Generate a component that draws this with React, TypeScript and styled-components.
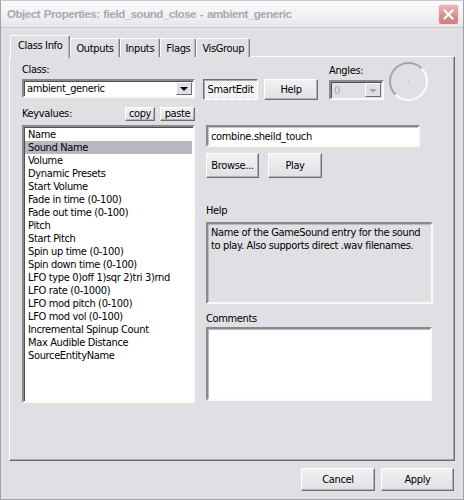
import styled, { createGlobalStyle } from "styled-components";

const FACE = "#e0dfe3";
const UI_FONT = `"DejaVu Sans Condensed", "Liberation Sans", sans-serif`;

const GlobalStyle = createGlobalStyle`
    html, body {
        margin: 0;
        padding: 0;
        background: ${FACE};
    }
    * { box-sizing: border-box; }
`;

//window frame
const Window = styled.div`
    width: 464px;
    height: 500px;
    display: flex;
    flex-direction: column;
    background: ${FACE};
    border: 1px solid #a4a3aa;
    border-top-color: #c9c8ce;
    font-family: ${UI_FONT};
    font-size: 11px;
    letter-spacing: -0.35px;
    color: #000;
`;
const TitleBar = styled.div`
    height: 27px;
    display: flex;
    align-items: center;
    justify-content: space-between;
    padding: 0 4px 0 6px;
    background: linear-gradient(#fbfbfc, #f1f1f3 60%, #e6e6ea);
    border-bottom: 1px solid #c8c7cd;
`;
const Title = styled.div`
    font-family: "Liberation Sans", sans-serif;
    font-weight: bold;
    font-size: 11.5px;
    color: #a9a8b1;
    letter-spacing: -0.45px;
    word-spacing: 1px;
`;
const CloseButton = styled.div`
    width: 21px;
    height: 21px;
    border-radius: 3px;
    border: 1px solid #f4e4e4;
    background: linear-gradient(#eab7b7, #d98f8f 60%, #cf7f7f);
    display: flex;
    align-items: center;
    justify-content: center;
`;

const Body = styled.div`
    flex: 1;
    display: flex;
    flex-direction: column;
    padding: 7px 8px 0 8px;
`;

//tabs
const TabStrip = styled.div`
    display: flex;
    align-items: flex-start;
    height: 22px;
    margin-bottom: -1px;
    padding-left: 1px;
    position: relative;
    z-index: 1;
`;
const Tab = styled.div<{ $active?: boolean }>`
    height: ${(p) => (p.$active ? "23px" : "19px")};
    margin-top: ${(p) => (p.$active ? "0" : "3px")};
    padding: ${(p) => (p.$active ? "0 7px 3px" : "0 5px")};
    display: flex;
    align-items: center;
    background: ${FACE};
    border: 1px solid #fff;
    border-bottom: none;
    border-right: 1px solid #7d7c82;
    border-radius: 2px 2px 0 0;
    box-shadow: inset -1px 0 0 #b9b8be;
    line-height: 13px;
`;
const TabPanel = styled.div`
    height: 405px;
    display: flex;
    flex-direction: column;
    padding: 0 12px;
    border: 1px solid #fff;
    border-right-color: #6b6a70;
    border-bottom-color: #6b6a70;
    box-shadow: inset -1px -1px 0 #a9a8ae;
`;

//top row: class combo, buttons, angles
const TopRow = styled.div`
    display: flex;
    align-items: flex-end;
    padding-top: 5px;
`;
const Field = styled.div<{ $ml?: number; $mb?: number }>`
    display: flex;
    flex-direction: column;
    margin-left: ${(p) => p.$ml ?? 0}px;
    margin-bottom: ${(p) => p.$mb ?? 0}px;
`;
const Label = styled.div<{ $mt?: number }>`
    line-height: 13px;
    height: 13px;
    margin-top: ${(p) => p.$mt ?? 0}px;
    white-space: nowrap;
`;
const Combo = styled.div<{ $w: number; $h: number; $disabled?: boolean }>`
    width: ${(p) => p.$w}px;
    height: ${(p) => p.$h}px;
    margin-top: 3px;
    display: flex;
    align-items: stretch;
    background: ${(p) => (p.$disabled ? FACE : "#fff")};
    color: ${(p) => (p.$disabled ? "#a8a7ad" : "#000")};
    border: 2px solid;
    border-color: #8a898f #fbfbf4 #fbfbf4 #8a898f;
    box-shadow: inset 1px 1px 0 #505054;
`;
const ComboText = styled.div`
    flex: 1;
    padding-left: 3px;
    display: flex;
    align-items: center;
`;
const DropButton = styled.div<{ $disabled?: boolean }>`
    width: 16px;
    margin: 1px;
    display: flex;
    align-items: center;
    justify-content: center;
    background: ${FACE};
    border: 1px solid;
    border-color: #fff #6e6d73 #6e6d73 #fff;
    &::after {
        content: "";
        border-left: 4px solid transparent;
        border-right: 4px solid transparent;
        border-top: 4px solid ${(p) => (p.$disabled ? "#a8a7ad" : "#000")};
        margin-top: 1px;
    }
`;
const Button = styled.div<{ $w: number; $h: number; $ml?: number; $mb?: number; $pressed?: boolean }>`
    width: ${(p) => p.$w}px;
    height: ${(p) => p.$h}px;
    margin-left: ${(p) => p.$ml ?? 0}px;
    margin-bottom: ${(p) => p.$mb ?? 0}px;
    display: flex;
    align-items: center;
    justify-content: center;
    white-space: nowrap;
    border: 1px solid;
    border-color: ${(p) => (p.$pressed ? "#6e6d73 #fff #fff #6e6d73" : "#fff #6e6d73 #6e6d73 #fff")};
    box-shadow: ${(p) => (p.$pressed ? "inset 1px 1px 0 #a9a8ae" : "inset -1px -1px 0 #b4b3b9")};
    background: ${(p) => (p.$pressed ? "repeating-conic-gradient(#fff 0 25%, #e8e7eb 0 50%) 0 0 / 2px 2px" : `linear-gradient(#f2f2f4, ${FACE})`)};
`;
const Dial = styled.div`
    width: 39px;
    height: 39px;
    margin-left: 5px;
    align-self: flex-start;
    border-radius: 50%;
    border: 2px solid;
    border-color: #a6a5ab #fbfbfb #fbfbfb #a6a5ab;
    display: flex;
    align-items: center;
    justify-content: center;
    &::after {
        content: "";
        width: 1px;
        height: 1px;
        background: #a6a5ab;
    }
`;

//keyvalues list and the editor on the right
const MainRow = styled.div`
    display: flex;
    margin-top: 5px;
`;
const LeftCol = styled.div`
    width: 173px;
    display: flex;
    flex-direction: column;
`;
const ListHeader = styled.div`
    display: flex;
    align-items: center;
    height: 15px;
`;
const Grow = styled.div`
    flex: 1;
    line-height: 13px;
`;
const SmallButton = styled(Button)`
    line-height: 11px;
`;
const ListBox = styled.div`
    margin-top: 4px;
    height: 278px;
    background: #fff;
    border: 2px solid;
    border-color: #8a898f #fbfbf4 #fbfbf4 #8a898f;
    box-shadow: inset 1px 1px 0 #505054;
    padding: 1px 1px 0 1px;
`;
const ListItem = styled.div<{ $selected?: boolean }>`
    height: 13px;
    line-height: 13px;
    padding-left: 3px;
    white-space: nowrap;
    background: ${(p) => (p.$selected ? "#b7b6c1" : "transparent")};
`;
const RightCol = styled.div`
    margin-left: 11px;
    padding-top: 19px;
    display: flex;
    flex-direction: column;
`;
const TextInput = styled.div`
    width: 214px;
    height: 22px;
    display: flex;
    align-items: center;
    padding-left: 3px;
    background: #fff;
    border: 2px solid;
    border-color: #8a898f #fbfbf4 #fbfbf4 #8a898f;
    box-shadow: inset 1px 1px 0 #c2c1c7;
`;
const ButtonRow = styled.div`
    display: flex;
    margin-top: 6px;
`;
const TextBox = styled.div<{ $w: number; $h: number; $white?: boolean; $mt: number }>`
    width: ${(p) => p.$w}px;
    height: ${(p) => p.$h}px;
    margin-top: ${(p) => p.$mt}px;
    padding: 2px 3px;
    line-height: 13px;
    background: ${(p) => (p.$white ? "#fff" : FACE)};
    border: 2px solid;
    border-color: #8a898f #fbfbf4 #fbfbf4 #8a898f;
    box-shadow: inset 1px 1px 0 #b8b7bd;
`;

const Footer = styled.div`
    display: flex;
    justify-content: flex-end;
    gap: 6px;
    margin-top: 7px;
    padding-right: 1px;
`;

const keyvalues = [
    "Name",
    "Sound Name",
    "Volume",
    "Dynamic Presets",
    "Start Volume",
    "Fade in time (0-100)",
    "Fade out time (0-100)",
    "Pitch",
    "Start Pitch",
    "Spin up time (0-100)",
    "Spin down time (0-100)",
    "LFO type 0)off 1)sqr 2)tri 3)rnd",
    "LFO rate (0-1000)",
    "LFO mod pitch (0-100)",
    "LFO mod vol (0-100)",
    "Incremental Spinup Count",
    "Max Audible Distance",
    "SourceEntityName",
];

const tabs = ["Class Info", "Outputs", "Inputs", "Flags", "VisGroup"];

function App() {
    return (
        <>
            <GlobalStyle />
            <Window>
                <TitleBar>
                    <Title>Object Properties: field_sound_close - ambient_generic</Title>
                    <CloseButton>
                        <svg width="11" height="11" viewBox="0 0 11 11">
                            <path d="M1.5 1.5 L9.5 9.5 M9.5 1.5 L1.5 9.5" stroke="#fff" strokeWidth="2" strokeLinecap="square" />
                        </svg>
                    </CloseButton>
                </TitleBar>
                <Body>
                    <TabStrip>
                        {tabs.map((t, i) => (
                            <Tab key={t} $active={i === 0}>{t}</Tab>
                        ))}
                    </TabStrip>
                    <TabPanel>
                        <TopRow>
                            <Field $mb={3}>
                                <Label>Class:</Label>
                                <Combo $w={173} $h={19}>
                                    <ComboText>ambient_generic</ComboText>
                                    <DropButton />
                                </Combo>
                            </Field>
                            <Button $w={55} $h={21} $ml={8} $mb={1} $pressed>SmartEdit</Button>
                            <Button $w={54} $h={21} $ml={6} $mb={1}>Help</Button>
                            <Field $ml={11} $mb={1}>
                                <Label>Angles:</Label>
                                <Combo $w={55} $h={20} $disabled>
                                    <ComboText>0</ComboText>
                                    <DropButton $disabled />
                                </Combo>
                            </Field>
                            <Dial />
                        </TopRow>
                        <MainRow>
                            <LeftCol>
                                <ListHeader>
                                    <Grow>Keyvalues:</Grow>
                                    <SmallButton $w={30} $h={14}>copy</SmallButton>
                                    <SmallButton $w={35} $h={14} $ml={5}>paste</SmallButton>
                                </ListHeader>
                                <ListBox>
                                    {keyvalues.map((k) => (
                                        <ListItem key={k} $selected={k === "Sound Name"}>{k}</ListItem>
                                    ))}
                                </ListBox>
                            </LeftCol>
                            <RightCol>
                                <TextInput>combine.sheild_touch</TextInput>
                                <ButtonRow>
                                    <Button $w={53} $h={25}>Browse...</Button>
                                    <Button $w={54} $h={25} $ml={9}>Play</Button>
                                </ButtonRow>
                                <Label $mt={26}>Help</Label>
                                <TextBox $w={227} $h={82} $mt={5}>
                                    Name of the GameSound entry for the sound to play. Also supports direct .wav filenames.
                                </TextBox>
                                <Label $mt={8}>Comments</Label>
                                <TextBox $w={226} $h={74} $mt={2} $white />
                            </RightCol>
                        </MainRow>
                    </TabPanel>
                    <Footer>
                        <Button $w={74} $h={23}>Cancel</Button>
                        <Button $w={73} $h={23}>Apply</Button>
                    </Footer>
                </Body>
            </Window>
        </>
    );
}

export default App;
